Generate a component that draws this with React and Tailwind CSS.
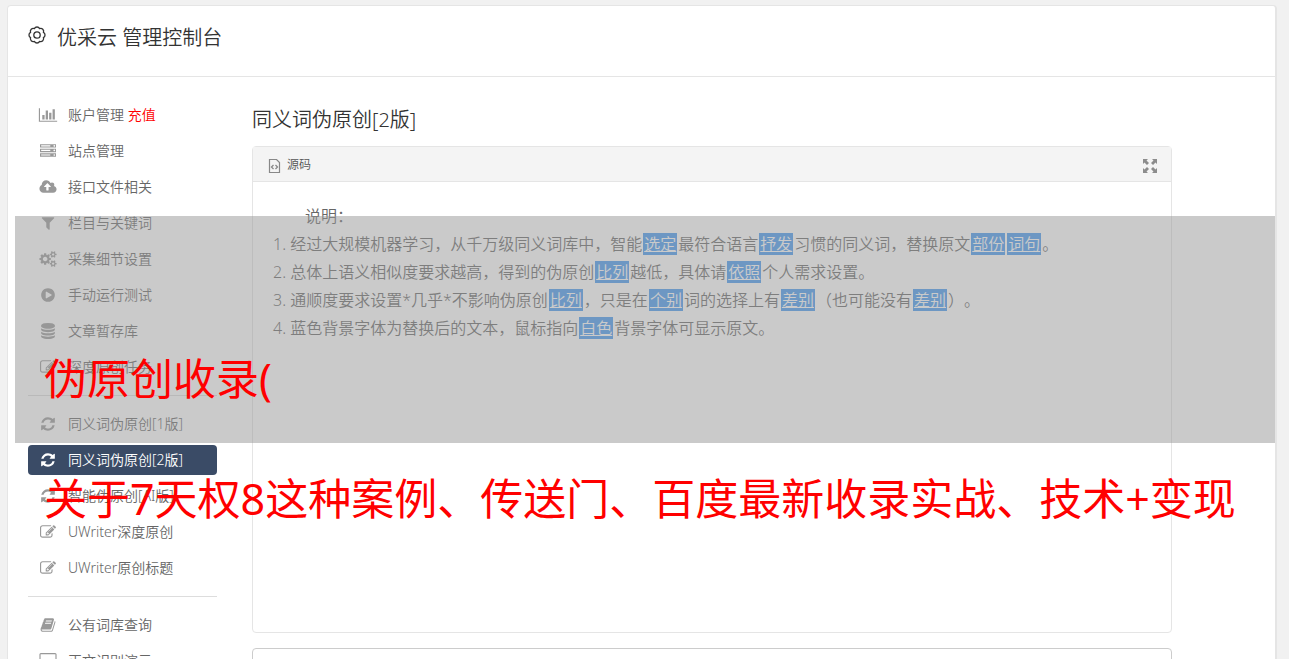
import React, { useState } from 'react';

const ICONS = {
  chart: {
    box: '0 0 2048 1792',
    d: 'M640 896v512h-256v-512h256zm384-512v1024h-256v-1024h256zm1024 1152v128h-2048v-1536h128v1408h1920zm-640-896v768h-256v-768h256zm384-384v1152h-256v-1152h256z',
  },
  server: {
    box: '0 0 1792 1792',
    d: 'M128 1408h1024v-128h-1024v128zm0-512h1024v-128h-1024v128zm1568 448q0-40-28-68t-68-28-68 28-28 68 28 68 68 28 68-28 28-68zm-1568-960h1024v-128h-1024v128zm1568 448q0-40-28-68t-68-28-68 28-28 68 28 68 68 28 68-28 28-68zm0-512q0-40-28-68t-68-28-68 28-28 68 28 68 68 28 68-28 28-68zm96 832v384h-1792v-384h1792zm0-512v384h-1792v-384h1792zm0-512v384h-1792v-384h1792z',
  },
  upload: {
    box: '0 0 1920 1792',
    d: 'M1280 864q0-14-9-23l-352-352q-9-9-23-9t-23 9l-351 351q-10 12-10 24 0 14 9 23t23 9h224v352q0 13 9.5 22.5t22.5 9.5h192q13 0 22.5-9.5t9.5-22.5v-352h224q13 0 22.5-9.5t9.5-22.5zm640 288q0 159-112.5 271.5t-271.5 112.5h-1088q-185 0-316.5-131.5t-131.5-316.5q0-130 70-240t188-165q-2-30-2-43 0-212 150-362t362-150q156 0 285.5 87t188.5 231q71-62 166-62 106 0 181 75t75 181q0 76-41 138 130 31 213.5 135.5t83.5 238.5z',
  },
  filter: {
    box: '0 0 1792 1792',
    d: 'M1595 295q17 41-14 70l-493 493v742q0 42-39 59-13 5-25 5-27 0-45-19l-256-256q-19-19-19-45v-486l-493-493q-31-29-14-70 17-39 59-39h1280q42 0 59 39z',
  },
  cogs: {
    box: '0 0 1920 1792',
    d: 'M896 896q0-106-75-181t-181-75-181 75-75 181 75 181 181 75 181-75 75-181zm768 512q0-52-38-90t-90-38-90 38-38 90q0 53 37.5 90.5t90.5 37.5 90.5-37.5 37.5-90.5zm0-1024q0-52-38-90t-90-38-90 38-38 90q0 53 37.5 90.5t90.5 37.5 90.5-37.5 37.5-90.5zm-384 421v185q0 10-7 19.5t-16 10.5l-155 24q-11 35-32 76 34 48 90 115 7 11 7 20 0 12-7 19-23 30-82.5 89.5t-78.5 59.5q-11 0-21-7l-115-90q-37 19-77 31-11 108-23 155-7 24-30 24h-186q-11 0-20-7.5t-10-17.5l-23-153q-34-10-75-31l-118 89q-7 7-20 7-11 0-21-8-144-133-144-160 0-9 7-19 10-14 41-53t47-61q-23-44-35-82l-152-24q-10-1-17-9.5t-7-19.5v-185q0-10 7-19.5t16-10.5l155-24q11-35 32-76-34-48-90-115-7-11-7-20 0-12 7-20 22-30 82-89t79-59q11 0 21 7l115 90q34-18 77-32 11-108 23-154 7-24 30-24h186q11 0 20 7.5t10 17.5l23 153q34 10 75 31l118-89q8-7 20-7 11 0 21 8 144 133 144 160 0 8-7 19-12 16-42 54t-45 60q23 48 34 82l152 23q10 2 17 10.5t7 19.5zm640 533v140q0 16-149 31-12 27-30 52 51 113 51 138 0 4-4 7-122 71-124 71-8 0-46-47t-52-68q-20 2-30 2t-30-2q-14 21-52 68t-46 47q-2 0-124-71-4-3-4-7 0-25 51-138-18-25-30-52-149-15-149-31v-140q0-16 149-31 13-29 30-52-51-113-51-138 0-4 4-7 4-2 35-20t59-34 30-16q8 0 46 46.5t52 67.5q20-2 30-2t30 2q51-71 92-112l6-2q4 0 124 70 4 3 4 7 0 25-51 138 17 23 30 52 149 15 149 31zm0-1024v140q0 16-149 31-12 27-30 52 51 113 51 138 0 4-4 7-122 71-124 71-8 0-46-47t-52-68q-20 2-30 2t-30-2q-14 21-52 68t-46 47q-2 0-124-71-4-3-4-7 0-25 51-138-18-25-30-52-149-15-149-31v-140q0-16 149-31 13-29 30-52-51-113-51-138 0-4 4-7 4-2 35-20t59-34 30-16q8 0 46 46.5t52 67.5q20-2 30-2t30 2q51-71 92-112l6-2q4 0 124 70 4 3 4 7 0 25-51 138 17 23 30 52 149 15 149 31z',
  },
  play: {
    box: '0 0 1792 1792',
    d: 'M896 128q209 0 385.5 103t279.5 279.5 103 385.5-103 385.5-279.5 279.5-385.5 103-385.5-103-279.5-279.5-103-385.5 103-385.5 279.5-279.5 385.5-103zm384 823q32-18 32-55t-32-55l-544-320q-31-19-64-1-32 19-32 56v640q0 37 32 56 16 8 32 8 17 0 32-9z',
  },
  database: {
    box: '0 0 1792 1792',
    d: 'M896 768q237 0 443-43t325-127v170q0 69-103 128t-280 93.5-385 34.5-385-34.5-280-93.5-103-128v-170q119 84 325 127t443 43zm0 768q237 0 443-43t325-127v170q0 69-103 128t-280 93.5-385 34.5-385-34.5-280-93.5-103-128v-170q119 84 325 127t443 43zm0-384q237 0 443-43t325-127v170q0 69-103 128t-280 93.5-385 34.5-385-34.5-280-93.5-103-128v-170q119 84 325 127t443 43zm0-1152q208 0 385 34.5t280 93.5 103 128v128q0 69-103 128t-280 93.5-385 34.5-385-34.5-280-93.5-103-128v-128q0-69 103-128t280-93.5 385-34.5z',
  },
  edit: {
    box: '0 0 1792 1792',
    d: 'M888 1184l116-116-152-152-116 116v56h96v96h56zm440-720q-16-16-33 1l-350 350q-17 17-1 33t33-1l350-350q17-17 1-33zm80 594v190q0 119-84.5 203.5t-203.5 84.5h-832q-119 0-203.5-84.5t-84.5-203.5v-832q0-119 84.5-203.5t203.5-84.5h832q63 0 117 25 15 7 18 23 3 17-9 29l-49 49q-14 14-32 8-23-6-45-6h-832q-66 0-113 47t-47 113v832q0 66 47 113t113 47h832q66 0 113-47t47-113v-126q0-13 9-22l64-64q15-15 35-7t20 29zm-96-738l288 288-672 672h-288v-288zm444 132l-92 92-288-288 92-92q28-28 68-28t68 28l152 152q28 28 28 68t-28 68z',
  },
  refresh: {
    box: '0 0 1792 1792',
    d: 'M1639 1056q0 5-1 7-64 268-268 434.5t-478 166.5q-146 0-282.5-55t-243.5-157l-129 129q-19 19-45 19t-45-19-19-45v-448q0-26 19-45t45-19h448q26 0 45 19t19 45-19 45l-137 137q71 66 161 102t187 36q134 0 250-65t186-179q11-17 53-117 8-23 30-23h192q13 0 22.5 9.5t9.5 22.5zm25-800v448q0 26-19 45t-45 19h-448q-26 0-45-19t-19-45 19-45l138-138q-148-137-349-137-134 0-250 65t-186 179q-11 17-53 117-8 23-30 23h-199q-13 0-22.5-9.5t-9.5-22.5v-7q65-268 270-434.5t480-166.5q146 0 284 55.5t245 156.5l130-129q19-19 45-19t45 19 19 45z',
  },
  book: {
    box: '0 0 1792 1792',
    d: 'M1703 478q40 57 18 129l-275 906q-19 64-76.5 107.5t-122.5 43.5h-923q-77 0-148.5-53.5t-99.5-131.5q-24-67-2-127 0-4 3-27t4-37q1-8-3-21.5t-3-19.5q2-11 8-21t16.5-23.5 16.5-23.5q23-38 45-91.5t30-91.5q3-10 .5-30t-.5-28q3-11 17-28t17-23q21-36 42-92t25-90q1-9-2.5-32t.5-28q4-13 22-30.5t22-22.5q19-26 42.5-84.5t27.5-96.5q1-8-3-25.5t-2-26.5q2-8 9-18t18-23 17-21q8-12 16.5-30.5t15-35 16-36 19.5-32 26.5-23.5 36-11.5 47.5 5.5l-1 3q38-9 51-9h761q74 0 114 56t18 130l-274 906q-36 119-71.5 153.5t-128.5 34.5h-869q-27 0-38 15-11 16-1 43 24 70 144 70h923q29 0 56-15.5t35-41.5l300-987q7-22 5-57 38 15 59 43zm-1064 2q-4 13 2 22.5t20 9.5h608q13 0 25.5-9.5t16.5-22.5l21-64q4-13-2-22.5t-20-9.5h-608q-13 0-25.5 9.5t-16.5 22.5zm-83 256q-4 13 2 22.5t20 9.5h608q13 0 25.5-9.5t16.5-22.5l21-64q4-13-2-22.5t-20-9.5h-608q-13 0-25.5 9.5t-16.5 22.5z',
  },
  desktop: {
    box: '0 0 1920 1792',
    d: 'M1792 992v-832q0-13-9.5-22.5t-22.5-9.5h-1600q-13 0-22.5 9.5t-9.5 22.5v832q0 13 9.5 22.5t22.5 9.5h1600q13 0 22.5-9.5t9.5-22.5zm128-832v1088q0 66-47 113t-113 47h-544q0 37 16 77.5t32 71 16 43.5q0 26-19 45t-45 19h-512q-26 0-45-19t-19-45q0-14 16-44t32-70 16-78h-544q-66 0-113-47t-47-113v-1088q0-66 47-113t113-47h1600q66 0 113 47t47 113z',
  },
};

const MENU = [
  [
    { id: 'account', icon: 'chart', label: '账户管理', extra: '充值' },
    { id: 'sites', icon: 'server', label: '站点管理' },
    { id: 'api', icon: 'upload', label: '接口文件相关' },
    { id: 'keywords', icon: 'filter', label: '栏目与关键词' },
    { id: 'collect', icon: 'cogs', label: '采集细节设置' },
    { id: 'test', icon: 'play', label: '手动运行测试' },
    { id: 'drafts', icon: 'database', label: '文章暂存库' },
    { id: 'deep', icon: 'edit', label: '深度原创任务' },
  ],
  [
    { id: 'syn1', icon: 'refresh', label: '同义词伪原创[1版]' },
    { id: 'syn2', icon: 'refresh', label: '同义词伪原创[2版]' },
    { id: 'ai', icon: 'refresh', label: '智能伪原创[AI版]' },
    { id: 'uwriter', icon: 'edit', label: 'UWriter深度原创' },
    { id: 'uwriter-title', icon: 'edit', label: 'UWriter原创标题' },
  ],
  [
    { id: 'lexicon', icon: 'book', label: '公有词库查询' },
    { id: 'extract', icon: 'desktop', label: '正文识别演示' },
  ],
];

const Icon = ({ name }) => (
  <svg viewBox={ICONS[name].box} className="h-4 w-5 shrink-0" fill="currentColor" aria-hidden="true">
    <path d={ICONS[name].d} />
  </svg>
);

const GearIcon = () => (
  <svg
    viewBox="0 0 18 18"
    className="mt-[3px] h-[18px] w-[18px] shrink-0"
    fill="none"
    stroke="currentColor"
    strokeWidth="1.3"
    strokeLinejoin="round"
    aria-hidden="true"
  >
    <path d="M15.4 6.4A2.900 2.900 0 0 1 15.4 11.6A2.900 2.900 0 0 1 11.6 15.4A2.900 2.900 0 0 1 6.4 15.4A2.900 2.900 0 0 1 2.6 11.6A2.900 2.900 0 0 1 2.6 6.4A2.900 2.900 0 0 1 6.4 2.6A2.900 2.900 0 0 1 11.6 2.6A2.900 2.900 0 0 1 15.4 6.4z" />
    <circle cx="9" cy="9" r="3.2" />
  </svg>
);

// Replaced word
const W = ({ children }) => (
  <span className="mx-px bg-[#4598f0] px-px text-white underline">{children}</span>
);

const Sidebar = () => {
  const [active, setActive] = useState('syn2');

  return (
    <nav className="w-[189px] shrink-0">
      {MENU.map((group, i) => (
        <ul
          key={i}
          className={`flex flex-col gap-1.5 ${i > 0 ? 'mt-[13px] border-t border-[#ddd] pt-[13px]' : ''}`}
        >
          {group.map((item) => (
            <li key={item.id}>
              <a
                href={`#${item.id}`}
                onClick={() => setActive(item.id)}
                className={`flex h-[30px] items-center gap-2.5 rounded px-2.5 text-sm ${
                  active === item.id ? 'bg-[#3a4b66] text-white' : 'text-[#666]'
                }`}
              >
                <span className={active === item.id ? 'text-white' : 'text-[#999]'}>
                  <Icon name={item.icon} />
                </span>
                <span>
                  {item.label}
                  {item.extra && <span className="text-[#f00]"> {item.extra}</span>}
                </span>
              </a>
            </li>
          ))}
        </ul>
      ))}
    </nav>
  );
};

const SourcePanel = () => (
  <section className="min-h-[487px] rounded border border-[#e5e5e5]">
    <div className="flex h-[35px] items-center justify-between border-b border-[#e5e5e5] bg-[#f4f4f4] px-3.5">
      <div className="flex items-center gap-1.5 pt-0.5 text-xs text-[#555]">
        <svg viewBox="0 0 14 14" className="mt-0.5 h-3.5 w-3.5" fill="none" stroke="#888" aria-hidden="true">
          <path d="M2.500.5h7l3 3v10h-10z" strokeWidth="1.200" />
          <path d="M6.500 6L4.500 8l2 2M8.500 6l2 2-2 2" strokeWidth="1.300" />
        </svg>
        源码
      </div>
      <button type="button" aria-label="全屏" className="mt-1 text-[#8c8c8c]">
        <svg viewBox="0 0 14 14" className="h-3.5 w-3.5" fill="currentColor" aria-hidden="true">
          <path d="M0 0h5L3.500 1.500 6 4 4 6 1.500 3.500 0 5zM14 0v5l-1.500-1.500L10 6 8 4l2.500-2.500L9 0zM0 14V9l1.500 1.500L4 8l2 2-2.500 2.500L5 14zM14 14H9l1.500-1.500L8 10l2-2 2.500 2.500L14 9z" />
        </svg>
      </button>
    </div>
    <div className="px-5 py-5 text-base leading-7 text-[#666] [text-spacing-trim:space-all]">
      <p className="indent-8">说明：</p>
      <ol className="list-inside list-decimal">
        <li>
          经过大规模机器学习，从千万级同义词库中，智能<W>选定</W>最符合语言<W>抒发</W>习惯的同义词，替换原文<W>部份</W><W>词句</W>。
        </li>
        <li>
          总体上语义相似度要求越高，得到的伪原创<W>比列</W>越低，具体请<W>依照</W>个人需求设置。
        </li>
        <li>
          通顺度要求设置*几乎*不影响伪原创<W>比列</W>，只是在<W>个别</W>词的选择上有<W>差别</W>（也可能没有<W>差别</W>）。
        </li>
        <li>
          蓝色背景字体为替换后的文本，鼠标指向<W>白色</W>背景字体可显示原文。
        </li>
      </ol>
    </div>
  </section>
);

export default function App() {
  return (
    <div className="relative h-screen overflow-hidden bg-[#f1f1f1] pt-[5px] pr-3 pl-[7px] font-['Noto_Sans','Noto_Sans_CJK_SC',sans-serif] font-[350]">
      <div className="rounded border border-r-2 border-[#e5e5e5] bg-white">
        <header className="flex h-[71px] items-start gap-[11px] border-b border-[#e5e5e5] px-5 pt-[17px] text-[#333]">
          <GearIcon />
          <h1 className="text-xl leading-[30px]">优采云 管理控制台</h1>
        </header>

        <div className="flex gap-[35px] pt-[23px] pr-[103px] pl-5">
          <Sidebar />
          <main className="flex min-w-0 flex-1 flex-col gap-[15px]">
            <div>
              <h2 className="mt-[5px] mb-[11px] text-xl leading-[30px] text-[#333]">同义词伪原创[2版]</h2>
              <SourcePanel />
            </div>
            <textarea aria-label="原文" className="h-40 w-full resize-none rounded border border-[#ccc]" />
          </main>
        </div>
      </div>

      {/* Title banner laid over the page */}
      <div className="absolute top-[216px] right-[14px] left-[15px] h-[227px] bg-[#969696]/50" />
      <div className="absolute top-[319px] left-11 text-[43px] leading-[120px] font-normal whitespace-nowrap text-[#f00]">
        <p>伪原创收录(</p>
        <p>关于7天权8这种案例、传送门、百度最新收录实战、技术+变现</p>
      </div>
    </div>
  );
}
